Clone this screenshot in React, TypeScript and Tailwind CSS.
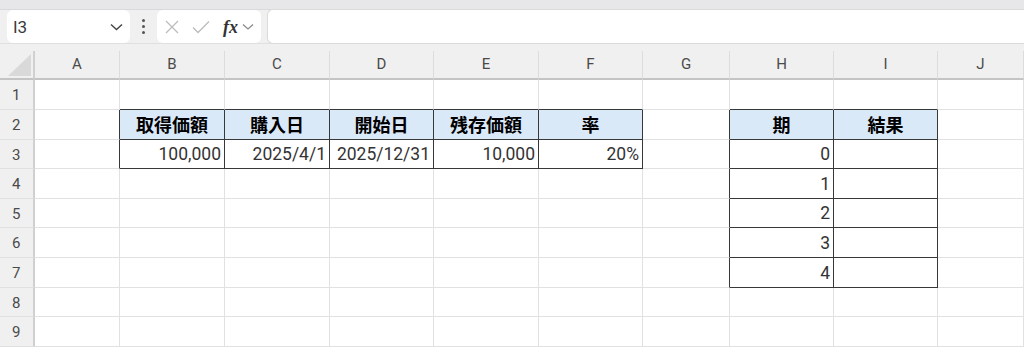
import React from "react";

const COLS = ["A", "B", "C", "D", "E", "F", "G", "H", "I", "J"];
const ROW_H = [30, 30, 29, 30, 29, 30, 30, 29, 30];

const inTable = (r: number, c: number) =>
  (r >= 2 && r <= 3 && c >= 1 && c <= 5) || (r >= 2 && r <= 7 && c >= 7 && c <= 8);

const cells: Record<string, { text: string; head?: boolean }> = {
  "2-1": { text: "取得価額", head: true },
  "2-2": { text: "購入日", head: true },
  "2-3": { text: "開始日", head: true },
  "2-4": { text: "残存価額", head: true },
  "2-5": { text: "率", head: true },
  "3-1": { text: "100,000" },
  "3-2": { text: "2025/4/1" },
  "3-3": { text: "2025/12/31" },
  "3-4": { text: "10,000" },
  "3-5": { text: "20%" },
  "2-7": { text: "期", head: true },
  "2-8": { text: "結果", head: true },
  "3-7": { text: "0" },
  "4-7": { text: "1" },
  "5-7": { text: "2" },
  "6-7": { text: "3" },
  "7-7": { text: "4" },
};

function Toolbar() {
  return (
    <div className="bg-[#f0f0f0]">
      <div className="h-[10px] bg-[#e7e7e9] border-b border-[#d9d9db]" />
      <div className="flex items-center h-[33px]">
        <div className="ml-[7px] w-[123px] h-[33px] bg-white rounded-md flex items-center justify-between pl-[6px] pr-[7px]">
          <span className="text-[17px] pt-[3px] text-[#3a3a3a] font-['Roboto',sans-serif]">I3</span>
          <svg width="13" height="8" viewBox="0 0 13 8">
            <path d="M1 1.5 L6.5 6.5 L12 1.5" fill="none" stroke="#444" strokeWidth="1.4" />
          </svg>
        </div>
        <div className="w-[27px] flex flex-col items-center gap-[3px]">
          <span className="w-[3px] h-[3px] rounded-full bg-[#555]" />
          <span className="w-[3px] h-[3px] rounded-full bg-[#555]" />
          <span className="w-[3px] h-[3px] rounded-full bg-[#555]" />
        </div>
        <div className="w-[104px] h-[33px] bg-white rounded-md flex items-center pl-[7px]">
          <svg width="16" height="16" viewBox="0 0 16 16">
            <path d="M2 2 L14 14 M14 2 L2 14" stroke="#bcbcbc" strokeWidth="1.3" />
          </svg>
          <svg width="20" height="16" viewBox="0 0 20 16" className="ml-[11px]">
            <path d="M2 8.5 L7 13.5 L18 2.5" fill="none" stroke="#bcbcbc" strokeWidth="1.3" />
          </svg>
          <span className="ml-[12px] text-[18px] font-bold italic text-[#333] font-['Liberation_Serif',serif] leading-none">fx</span>
          <svg width="12" height="8" viewBox="0 0 12 8" className="ml-[4px]">
            <path d="M1 1.5 L6 6 L11 1.5" fill="none" stroke="#888" strokeWidth="1.2" />
          </svg>
        </div>
        <div className="ml-[6px] flex-1 h-[35px] bg-white border border-r-0 border-[#dadada] rounded-l-md" />
      </div>
      <div className="h-[8px] border-t border-[#e0e0e0]" />
    </div>
  );
}

function Sheet() {
  return (
    <div className="grid grid-cols-[35px_85px_105px_105px_104px_105px_104px_87px_104px_104px_1fr] font-['Roboto',sans-serif]">
      <div className="h-[29px] bg-[#f0f0f0] border-r-2 border-b-2 border-r-[#d0d0d0] border-b-[#c4c4c4] flex items-end justify-end pr-[2px] pb-[2px]">
        <svg width="23" height="22" viewBox="0 0 23 22">
          <path d="M0 22 L23 22 L23 0 Z" fill="#d9d9d9" />
        </svg>
      </div>
      {COLS.map((c) => (
        <div
          key={c}
          className="h-[29px] bg-[#f0f0f0] border-r border-b-2 border-r-[#dcdcdc] border-b-[#c4c4c4] flex items-center justify-center text-[15px] text-[#4a4a4a]"
        >
          {c}
        </div>
      ))}
      {ROW_H.map((h, i) => {
        const r = i + 1;
        return (
          <React.Fragment key={r}>
            <div
              style={{ height: h }}
              className="bg-[#f0f0f0] border-r-2 border-b border-r-[#d0d0d0] border-b-[#e0e0e0] flex items-center pl-[12px] pt-[2px] text-[15px] text-[#4a4a4a]"
            >
              {r}
            </div>
            {COLS.map((_, c) => {
              const cell = cells[`${r}-${c}`];
              const rightDark = inTable(r, c) || inTable(r, c + 1);
              const bottomDark = inTable(r, c) || inTable(r + 1, c);
              return (
                <div
                  key={c}
                  style={{ height: h }}
                  className={[
                    "border-r border-b flex items-center overflow-hidden whitespace-nowrap",
                    rightDark ? "border-r-[#383838]" : "border-r-[#e1e1e1]",
                    bottomDark ? "border-b-[#383838]" : "border-b-[#e1e1e1]",
                    cell?.head ? "bg-[#dae9f8] justify-center" : "bg-white justify-end pr-[3px]",
                  ].join(" ")}
                >
                  {cell &&
                    (cell.head ? (
                      <span className="text-[18px] font-bold text-black font-['Noto_Sans_CJK_JP',sans-serif]">
                        {cell.text}
                      </span>
                    ) : (
                      <span className="text-[17.5px] text-[#333] pt-[1px]">{cell.text}</span>
                    ))}
                </div>
              );
            })}
          </React.Fragment>
        );
      })}
    </div>
  );
}

export default function App() {
  return (
    <div className="w-[1024px] h-[348px] overflow-hidden bg-white">
      <Toolbar />
      <Sheet />
    </div>
  );
}
